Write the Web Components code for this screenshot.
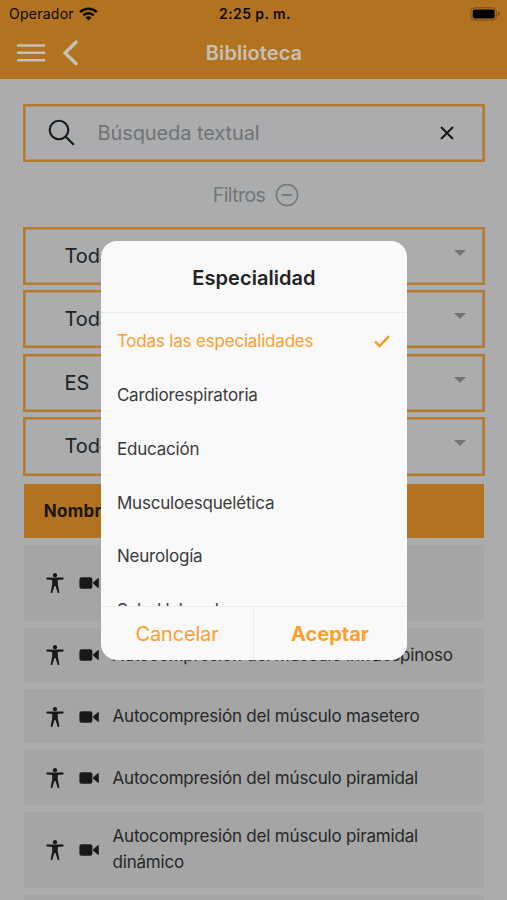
<!DOCTYPE html>
<html lang="es">
<head>
<meta charset="utf-8">
<title>Biblioteca</title>
<style>
  html, body { margin: 0; height: 100%; overflow: hidden; }
  body {
    font-family: Inter, "Liberation Sans", sans-serif;
    color: #202224;
    background: #aaacae;
    --bar: #b2721f;
    --line: #b87a2b;
    --row: #a5a5a5;
    --accent: #fba02f;
  }
</style>
</head>
<body>
<library-page>
  <status-bar slot="top"></status-bar>
  <nav-bar slot="top">Biblioteca</nav-bar>
  <search-box>Búsqueda textual</search-box>
  <filter-toggle>Filtros</filter-toggle>
  <div class="filters" style="display:grid;gap:5.2px">
    <select-box>Todas</select-box>
    <select-box>Todas</select-box>
    <select-box>ES</select-box>
    <select-box>Todos</select-box>
  </div>
  <result-table>
    <span slot="head">Nombre</span>
    <result-row tall></result-row>
    <result-row>Autocompresión del músculo infraespinoso</result-row>
    <result-row>Autocompresión del músculo masetero</result-row>
    <result-row>Autocompresión del músculo piramidal</result-row>
    <result-row tall>Autocompresión del músculo piramidal dinámico</result-row>
    <result-row></result-row>
  </result-table>
  <option-dialog slot="overlay">
    <span slot="title">Especialidad</span>
    <option-item selected>Todas las especialidades</option-item>
    <option-item>Cardiorespiratoria</option-item>
    <option-item>Educación</option-item>
    <option-item>Musculoesquelética</option-item>
    <option-item>Neurología</option-item>
    <option-item>Salud laboral</option-item>
    <span slot="cancel">Cancelar</span>
    <span slot="ok">Aceptar</span>
  </option-dialog>
</library-page>

<script>
  // small helper: every element is just markup + styles in an open root
  function define(name, html) {
    const tpl = document.createElement('template');
    tpl.innerHTML = html;
    customElements.define(name, class extends HTMLElement {
      constructor() {
        super();
        this.attachShadow({ mode: 'open' }).appendChild(tpl.content.cloneNode(true));
      }
    });
  }

  define('library-page', `
    <style>
      :host { display: block; position: relative; height: 900px; overflow: hidden; }
      main { padding: 24.5px 22px 0 23px; }
      .overlay { position: absolute; inset: 0; display: grid; place-items: center; padding-top: 1px; box-sizing: border-box; }
    </style>
    <slot name="top"></slot>
    <main><slot></slot></main>
    <div class="overlay"><slot name="overlay"></slot></div>`);

  define('status-bar', `
    <style>
      :host { display: grid; grid-template-columns: 1fr auto 1fr; align-items: center; height: 27px; padding: 0 6px 0 9px; background: var(--bar); color: #0d0a06; font-size: 14px; }
      .left { display: flex; align-items: center; gap: 5px; letter-spacing: .25px; }
      b { font-weight: 600; letter-spacing: .4px; }
      .right { justify-self: end; display: flex; }
    </style>
    <span class="left">Operador
      <svg width="19" height="14" viewBox="0 0 19 14" fill="none" stroke="#0d0a06" stroke-width="2.5">
        <path d="M1.2 5.2a11.8 11.8 0 0 1 16.6 0M4.3 8.3a7.4 7.4 0 0 1 10.4 0"/>
        <path d="M9.5 13.6 6.4 10.5a4.4 4.4 0 0 1 6.2 0z" fill="#0d0a06" stroke="none"/>
      </svg>
    </span>
    <b>2:25 p. m.</b>
    <span class="right">
      <svg width="31" height="14" viewBox="0 0 31 14">
        <rect x=".8" y=".8" width="25.8" height="12.4" rx="4" fill="none" stroke="#7b501b"/>
        <rect x="2.7" y="2.6" width="22" height="8.8" rx="2" fill="#000"/>
        <path d="M28 4.8c2.4.6 2.4 3.8 0 4.4z" fill="#7b501b"/>
      </svg>
    </span>`);

  define('nav-bar', `
    <style>
      :host { display: grid; grid-template-columns: 1fr auto 1fr; align-items: center; height: 52px; padding: 0 15px 0 16px; background: var(--bar); color: #c5c0b8; }
      .left { display: flex; align-items: center; gap: 16px; }
      h1 { margin: 0; font-size: 20px; font-weight: 600; letter-spacing: .08px; }
    </style>
    <span class="left">
      <svg width="30" height="20" viewBox="0 0 30 20" stroke="#c5c0b8" stroke-width="2.5" stroke-linecap="round">
        <path d="M2 2.5h26M2 9.8h26M2 17.2h26"/>
      </svg>
      <svg width="17" height="26" viewBox="0 0 17 26" fill="none" stroke="#c5c0b8" stroke-width="3.5" stroke-linecap="round" stroke-linejoin="round">
        <path d="M14 2.2 3 13l11 10.6"/>
      </svg>
    </span>
    <h1><slot></slot></h1>`);

  define('search-box', `
    <style>
      :host { display: flex; align-items: center; height: 58.5px; box-sizing: border-box; box-shadow: inset 0 0 0 2.6px var(--line); padding: 0 31.5px 0 25px; color: #717375; font-size: 20px; }
      .text { flex: 1; margin-left: 21.5px; letter-spacing: -.1px; }
    </style>
    <svg width="28" height="28" viewBox="0 0 28 28" fill="none" stroke="#17191b" stroke-width="2.1">
      <circle cx="11" cy="11" r="9.3"/><path d="M17.7 17.7 25.8 25.8"/>
    </svg>
    <span class="text"><slot></slot></span>
    <svg width="14" height="14" viewBox="0 0 14 14" stroke="#17191b" stroke-width="2.1">
      <path d="M1 1l12 12M13 1 1 13"/>
    </svg>`);

  define('filter-toggle', `
    <style>
      :host { display: flex; align-items: center; justify-content: center; gap: 10px; height: 64.5px; padding: 1px 0 0 4px; box-sizing: border-box; color: #747678; font-size: 19.5px; letter-spacing: -.6px; }
    </style>
    <slot></slot>
    <svg width="24" height="24" viewBox="0 0 24 24" fill="none" stroke="#747678">
      <circle cx="12" cy="12" r="10.6" stroke-width="1.5"/><path d="M6.8 12h10.4" stroke-width="1.8"/>
    </svg>`);

  define('select-box', `
    <style>
      :host { display: flex; align-items: center; justify-content: space-between; height: 58.4px; box-sizing: border-box; box-shadow: inset 0 0 0 2.6px var(--line); padding: 0 19px 0 41.5px; font-size: 20px; letter-spacing: -.1px; }
      i { width: 0; border: 6px solid transparent; border-top-color: #717375; border-bottom: 0; margin-bottom: 6px; }
    </style>
    <slot></slot><i></i>`);

  define('result-table', `
    <style>
      :host { display: block; margin: 8px 1px 0; }
      header { height: 54px; display: flex; align-items: center; padding-left: 19.8px; background: var(--bar); color: #1a1611; font-size: 17px; font-weight: 700; letter-spacing: .25px; }
      .rows { display: grid; gap: 7px; padding-top: 7px; }
    </style>
    <header><slot name="head"></slot></header>
    <div class="rows"><slot></slot></div>`);

  define('result-row', `
    <style>
      :host { display: flex; align-items: center; box-sizing: border-box; min-height: 54.3px; padding: 0 24px 0 22px; background: var(--row); color: #262728; font-size: 17px; line-height: 25.5px; letter-spacing: -.19px; }
      :host([tall]) { min-height: 76px; }
      svg { flex: none; margin-top: 1px; }
      .cam { margin: 1px 12.5px 0 15px; }
      .name { padding-top: 2px; }
      :host([tall]) .name { padding-top: .6px; }
    </style>
    <svg width="18" height="20" viewBox="0 0 18 20" fill="#17191a">
      <circle cx="9" cy="2.2" r="2.1"/>
      <path d="M1.2 4.6h15.6a.8.8 0 0 1 0 1.9l-5 .6v4.2l1.5 7.6a.9.9 0 0 1-1.8.4L9.5 13h-1l-2 6.3a.9.9 0 0 1-1.8-.4l1.5-7.6V7.1l-5-.6a.8.8 0 0 1 0-1.9z"/>
    </svg>
    <svg class="cam" width="21" height="12" viewBox="0 0 21 12" fill="#17191a">
      <rect x=".4" y=".2" width="13" height="11.6" rx="2.2"/>
      <path d="M14.2 5.2 18.6 1.4c.6-.5 1.2-.3 1.2.4v8.4c0 .7-.6.9-1.2.4l-4.4-3.8z"/>
    </svg>
    <span class="name"><slot></slot></span>`);

  define('option-dialog', `
    <style>
      :host { display: flex; flex-direction: column; width: 306px; height: 419px; border-radius: 16px; overflow: hidden; background: #f9f9f9; }
      h2 { margin: 0; flex: none; height: 72px; box-sizing: border-box; border-bottom: 1px solid #ececed; display: grid; place-items: center; padding: 3px 0 0 1px; font-size: 20px; font-weight: 600; letter-spacing: .05px; }
      .list { flex: 1; min-height: 0; overflow: hidden; padding-top: 1.6px; }
      footer { flex: none; height: 54px; box-sizing: border-box; border-top: 1px solid #ececed; display: grid; grid-template-columns: 152px 1fr; color: var(--accent); font-size: 20px; }
      footer span { display: grid; place-items: center; }
      .cancel { letter-spacing: -.15px; padding-left: 1px; }
      .ok { border-left: 1px solid #ececed; font-weight: 700; }
    </style>
    <h2><slot name="title"></slot></h2>
    <div class="list"><slot></slot></div>
    <footer><span class="cancel"><slot name="cancel"></slot></span><span class="ok"><slot name="ok"></slot></span></footer>`);

  define('option-item', `
    <style>
      :host { display: flex; align-items: center; justify-content: space-between; height: 53.7px; padding: 0 17px 0 16.4px; color: #3a3b3d; font-size: 17px; letter-spacing: -.19px; }
      :host([selected]) { color: var(--accent); }
      svg { display: none; }
      :host([selected]) svg { display: block; }
    </style>
    <slot></slot>
    <svg width="16" height="13" viewBox="0 0 16 13" fill="none" stroke="#fb9a22" stroke-width="2.5">
      <path d="M1 6.7 5.6 11 15 1.2"/>
    </svg>`);
</script>
</body>
</html>
